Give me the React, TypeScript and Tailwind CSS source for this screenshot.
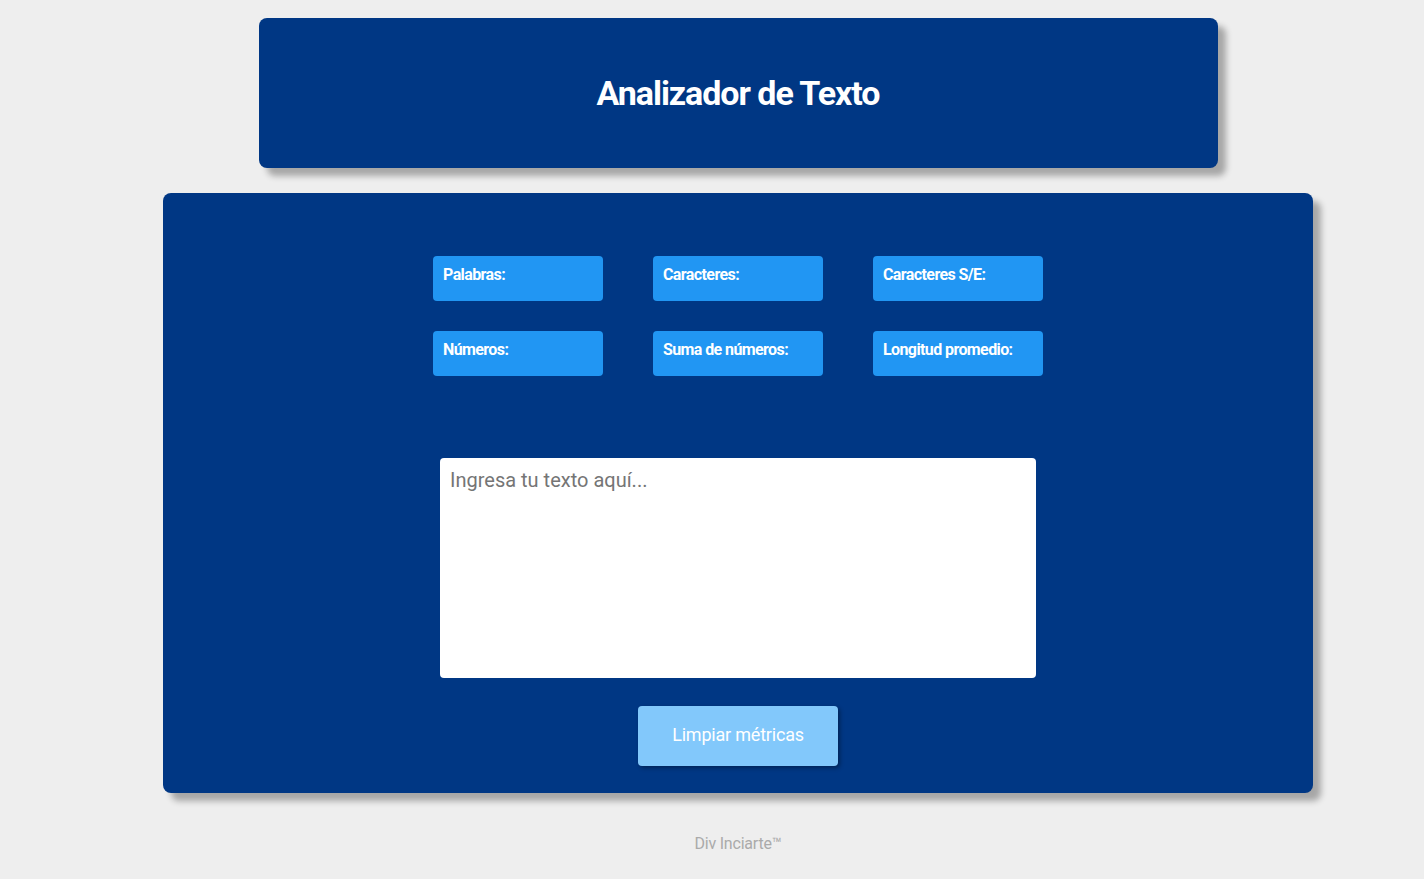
import React, { useMemo, useState } from "react";

const metrics = [
  "Palabras:",
  "Caracteres:",
  "Caracteres S/E:",
  "Números:",
  "Suma de números:",
  "Longitud promedio:",
];

const App: React.FC = () => {
  const [text, setText] = useState("");

  // Only the labels are shown while the box is empty
  const values = useMemo(() => {
    if (!text) return metrics.map(() => "");
    const words = text.trim().split(/\s+/).filter(Boolean);
    const nums = text.match(/-?\d+(\.\d+)?/g) || [];
    const sum = nums.reduce((a, n) => a + parseFloat(n), 0);
    const avg = words.length
      ? (words.join("").length / words.length).toFixed(2)
      : "0";
    return [
      String(words.length),
      String(text.length),
      String(text.replace(/\s/g, "").length),
      String(nums.length),
      String(sum),
      avg,
    ];
  }, [text]);

  return (
    <div
      className="min-h-[879px] bg-[#eeeeee] pl-[52px] pt-[18px]"
      style={{ fontFamily: "Roboto, 'Liberation Sans', sans-serif" }}
    >
      {/* Header */}
      <header className="mx-auto flex h-[150px] w-[959px] items-center justify-center rounded-lg bg-[#003784] shadow-[8px_8px_6px_rgba(0,0,0,0.3)]">
        <h1 className="text-[34px] font-bold tracking-[-1.05px] text-white">
          Analizador de Texto
        </h1>
      </header>

      {/* Main panel */}
      <main className="mx-auto mt-[25px] flex h-[600px] w-[1150px] flex-col items-center rounded-lg bg-[#003784] pt-[63px] shadow-[8px_8px_6px_rgba(0,0,0,0.3)]">
        <div className="grid grid-cols-[170px_170px_170px] gap-x-[50px] gap-y-[30px]">
          {metrics.map((label, i) => (
            <div
              key={label}
              className="h-[45px] rounded bg-[#2196f3] px-[10px] pt-[9px] text-[16px] font-bold leading-[20px] tracking-[-0.6px] text-white"
            >
              {label} {values[i]}
            </div>
          ))}
        </div>

        <textarea
          value={text}
          onChange={(e) => setText(e.target.value)}
          placeholder="Ingresa tu texto aquí..."
          className="mt-[82px] h-[220px] w-[596px] resize-none rounded bg-white px-[10px] py-[9px] text-[20px] leading-[26px] text-[#333] outline-none placeholder:text-[#757575]"
        />

        <button
          onClick={() => setText("")}
          className="mt-[28px] h-[60px] w-[200px] rounded bg-[#82c8fb] pb-[3px] text-[18px] tracking-[-0.2px] text-white shadow-[2px_2px_4px_rgba(0,0,0,0.35)]"
        >
          Limpiar métricas
        </button>
      </main>

      <footer className="pt-[39px] text-center text-[16px] tracking-[-0.2px] text-[#aaaaaa]">
        Div Inciarte™
      </footer>
    </div>
  );
};

export default App;
